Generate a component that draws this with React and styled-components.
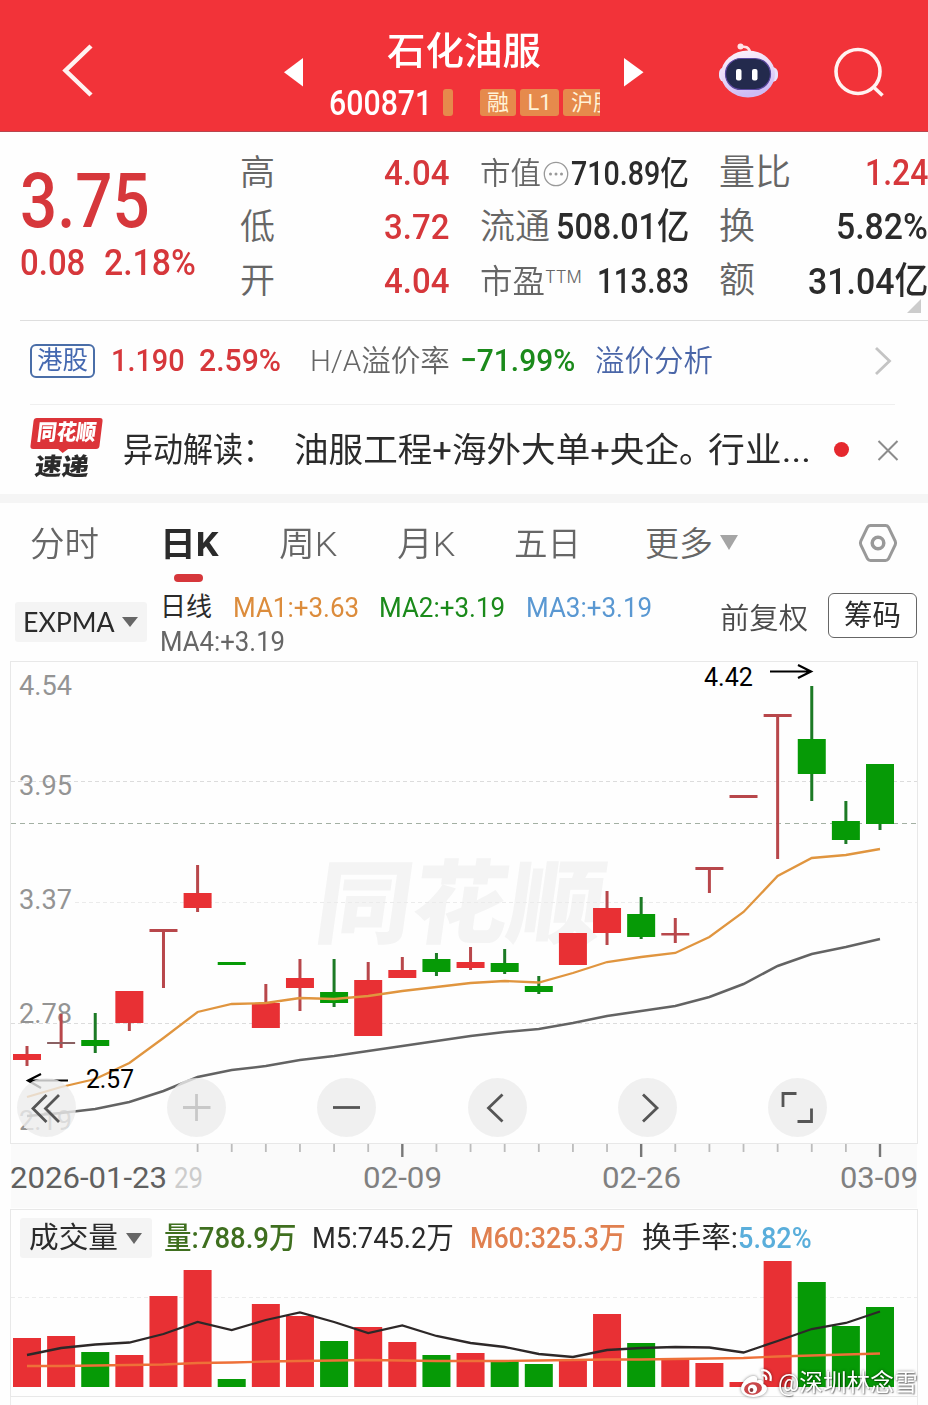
import React from "react";
import styled, { createGlobalStyle, css } from "styled-components";

const RED = "#d6373b";
const GREEN = "#1b8a1b";
const INK = "#2b2b2b";
const GREY = "#666";

const GlobalStyle = createGlobalStyle`
  * {
    box-sizing: border-box;
  }
  body {
    margin: 0;
    background: #fefefe;
    font-family: Roboto, "Noto Sans CJK SC", sans-serif;
    color: ${INK};
  }
  svg {
    display: block;
  }
`;

const Page = styled.div`
  width: 928px;
  height: 1405px;
  overflow: hidden;
  position: relative;
  display: flex;
  flex-direction: column;
`;

const FitBox = styled.span`
  display: inline-block;
  flex: none;
  width: ${(p) => p.$w}px;
  height: ${(p) => p.$size * 1.2}px;
  line-height: ${(p) => p.$size * 1.2}px;
  font-size: ${(p) => p.$size}px;
  font-weight: ${(p) => p.$weight || 400};
  font-family: ${(p) => p.$font || "inherit"};
  color: ${(p) => p.$color || "inherit"};
  white-space: nowrap;
  margin-left: ${(p) => p.$ml || 0}px;
`;

const FitText = styled.span`
  display: inline-block;
  transform-origin: 0 50%;
`;

// Squeezes or stretches a run of text to the given width
function Fit({ w, size, weight, color, font, ml, children }) {
  const ref = React.useRef(null);
  const [scale, setScale] = React.useState(1);

  React.useLayoutEffect(() => {
    setScale(w / ref.current.offsetWidth);
  }, [w, children]);

  return (
    <FitBox $w={w} $size={size} $weight={weight} $color={color} $font={font} $ml={ml}>
      <FitText ref={ref} style={{ transform: `scaleX(${scale})` }}>
        {children}
      </FitText>
    </FitBox>
  );
}

/* ---------- header ---------- */

const Header = styled.header`
  height: 132px;
  background: #f23339;
  border-bottom: 1px solid #b8464e;
  color: #fff;
  display: grid;
  grid-template-columns: 284px 20px 320px 20px 1fr;
  align-items: start;
  flex: none;
`;

const BackButton = styled.div`
  padding: 42px 0 0 60px;
`;

const ArrowSlot = styled.div`
  padding-top: 58px;
`;

const TitleBlock = styled.div`
  display: flex;
  flex-direction: column;
  padding-top: 29px;
`;

const NameLine = styled.div`
  padding-left: 83px;
  height: 44px;
`;

const CodeLine = styled.div`
  display: flex;
  align-items: center;
  height: 58px;
  width: 296px;
  padding-left: 25px;
  overflow: hidden;
`;

const Code = styled.div`
  padding-top: 3px;
`;

const Tag = styled.span`
  height: 27px;
  flex: none;
  width: ${(p) => p.$w}px;
  margin-left: ${(p) => p.$ml}px;
  border-radius: 3px;
  background: #e68a4c;
  color: #fff3d8;
  font-size: 22px;
  line-height: 27px;
  text-align: ${(p) => (p.$clip ? "left" : "center")};
  padding-left: ${(p) => (p.$clip ? "8px" : "0")};
  overflow: hidden;
  white-space: nowrap;
`;

const HeaderTools = styled.div`
  display: flex;
  gap: 54px;
  padding: 42px 0 0 72px;
`;

function StockHeader() {
  return (
    <Header>
      <BackButton>
        <svg width="36" height="58" viewBox="0 0 36 58" fill="none">
          <path d="M31 4 5.500 28.500 31 53" stroke="#fff3f1" strokeWidth="4.500" />
        </svg>
      </BackButton>
      <ArrowSlot>
        <svg width="20" height="29">
          <path d="M19 0V28.500L0 14.200Z" fill="#fff" />
        </svg>
      </ArrowSlot>
      <TitleBlock>
        <NameLine>
          <Fit w={154} size={38} weight={500}>石化油服</Fit>
        </NameLine>
        <CodeLine>
          <Code>
            <Fit w={103} size={35} weight={500}>600871</Fit>
          </Code>
          <Tag $w={10} $ml={11} />
          <Tag $w={36} $ml={27}>融</Tag>
          <Tag $w={39} $ml={4}>L1</Tag>
          <Tag $w={60} $ml={4} $clip>沪股</Tag>
        </CodeLine>
      </TitleBlock>
      <ArrowSlot>
        <svg width="20" height="29">
          <path d="M0 0V28.500L19.500 14.200Z" fill="#fff" />
        </svg>
      </ArrowSlot>
      <HeaderTools>
        <svg width="62" height="58" viewBox="0 0 62 58">
          <defs>
            <linearGradient id="shell" x1="0" y1="0" x2="0.300" y2="1">
              <stop offset="0" stopColor="#fff4fb" />
              <stop offset="0.600" stopColor="#e6d6f7" />
              <stop offset="1" stopColor="#cdbcf5" />
            </linearGradient>
          </defs>
          <path d="M34 10C33 5 29 4 25 5" stroke="#ffe3e6" strokeWidth="2.500" fill="none" />
          <circle cx="24.500" cy="4.500" r="3" fill="#ffe3e6" />
          <rect x="3" y="25" width="59" height="15" rx="6" fill="#e9e2fb" />
          <ellipse cx="32" cy="32" rx="27" ry="23.500" fill="url(#shell)" />
          <rect x="9.500" y="16.500" width="45" height="31" rx="15.500" fill="#232a4d" stroke="#5b48a0" strokeWidth="1.200" />
          <rect x="20" y="27" width="5.500" height="11.500" rx="2" fill="#fff" />
          <rect x="36" y="27" width="5.500" height="11.500" rx="2" fill="#fff" />
        </svg>
        <svg width="54" height="58" viewBox="0 0 54 58" fill="none" stroke="#fff3f1" strokeWidth="3.600">
          <circle cx="26" cy="29.500" r="22" />
          <path d="M41 44.500 50.500 53.500" />
        </svg>
      </HeaderTools>
    </Header>
  );
}

/* ---------- quote ---------- */

const Quote = styled.section`
  height: 189px;
  flex: none;
  margin-left: 20px;
  padding-top: 15px;
  border-bottom: 1px solid #dedede;
  display: grid;
  grid-template-columns: 220px 209px 209px 209px;
  align-items: start;
`;

const PriceBlock = styled.div`
  padding-top: 9px;
`;

const DeltaLine = styled.div`
  display: flex;
  margin-top: -5px;
`;

const Stats = styled.div`
  display: grid;
  grid-template-rows: repeat(3, 54px);
  margin-left: ${(p) => p.$shift || 0}px;
  width: 209px;
`;

const Stat = styled.div`
  display: flex;
  align-items: center;
  justify-content: space-between;
`;

const Label = styled.span`
  display: flex;
  align-items: center;
  gap: 2px;
`;

const Ttm = styled.span`
  font: 300 17px Inter, sans-serif;
  color: ${GREY};
  margin-bottom: 11px;
  margin-left: -2px;
`;

const Corner = styled.svg`
  position: absolute;
  top: 299px;
  left: 906px;
`;

function QuotePanel() {
  return (
    <Quote>
      <PriceBlock>
        <Fit w={130} size={76} weight={500} color={RED}>3.75</Fit>
        <DeltaLine>
          <Fit w={65} size={36} weight={500} color={RED}>0.08</Fit>
          <Fit w={92} size={36} weight={500} color={RED} ml={19}>2.18%</Fit>
        </DeltaLine>
      </PriceBlock>
      <Stats>
        {[["高", "4.04"], ["低", "3.72"], ["开", "4.04"]].map(([k, v]) => (
          <Stat key={k}>
            <Fit w={35} size={35} weight={350} color={GREY}>{k}</Fit>
            <Fit w={65} size={35} weight={500} color={RED}>{v}</Fit>
          </Stat>
        ))}
      </Stats>
      <Stats $shift={31}>
        <Stat>
          <Label>
            <Fit w={61} size={31} weight={350} color={GREY}>市值</Fit>
            <svg width="26" height="26" viewBox="0 0 26 26">
              <circle cx="13" cy="13" r="11.700" fill="none" stroke="#999" strokeWidth="1.300" />
              <g fill="#999">
                <circle cx="7.500" cy="13" r="1.500" />
                <circle cx="13" cy="13" r="1.500" />
                <circle cx="18.500" cy="13" r="1.500" />
              </g>
            </svg>
          </Label>
          <Fit w={118} size={33} weight={500}>710.89亿</Fit>
        </Stat>
        <Stat>
          <Fit w={70} size={35} weight={350} color={GREY}>流通</Fit>
          <Fit w={133} size={36} weight={500}>508.01亿</Fit>
        </Stat>
        <Stat>
          <Label>
            <Fit w={65} size={33} weight={350} color={GREY}>市盈</Fit>
            <Ttm>TTM</Ttm>
          </Label>
          <Fit w={92} size={35} weight={500}>113.83</Fit>
        </Stat>
      </Stats>
      <Stats $shift={61}>
        <Stat>
          <Fit w={72} size={36} weight={350} color={GREY}>量比</Fit>
          <Fit w={63} size={36} weight={500} color={RED}>1.24</Fit>
        </Stat>
        <Stat>
          <Fit w={36} size={36} weight={350} color={GREY}>换</Fit>
          <Fit w={92} size={36} weight={500}>5.82%</Fit>
        </Stat>
        <Stat>
          <Fit w={36} size={36} weight={350} color={GREY}>额</Fit>
          <Fit w={120} size={37} weight={500}>31.04亿</Fit>
        </Stat>
      </Stats>
      <Corner width="16" height="15">
        <path d="M15 0V14H1Z" fill="#ccc" />
      </Corner>
    </Quote>
  );
}

const HkRow = styled.section`
  height: 84px;
  flex: none;
  margin: 0 33px 0 30px;
  border-bottom: 1px solid #efefef;
  display: flex;
  align-items: center;
  padding-bottom: 4px;
`;

const HkBadge = styled.span`
  width: 65px;
  height: 34px;
  border: 2px solid #4a6ea8;
  border-radius: 6px;
  display: flex;
  align-items: center;
  justify-content: center;
  margin-right: 16px;
`;

const Spacer = styled.span`
  flex: 1;
`;

const News = styled.section`
  height: 89px;
  flex: none;
  display: flex;
  align-items: center;
  padding: 2px 29px 0 30px;
`;

const NewsLogo = styled.div`
  width: 74px;
  margin: 0 22px 2px -3px;
  display: flex;
  flex-direction: column;
  align-items: center;
  transform: skewX(-7deg);
`;

const LogoTop = styled.div`
  width: 69px;
  height: 31px;
  background: #dc3439;
  border-radius: 3px;
  color: #fff;
  display: flex;
  align-items: center;
  justify-content: center;
`;

const Dot = styled.span`
  width: 15px;
  height: 15px;
  border-radius: 50%;
  background: #e5282e;
  margin: 0 28px 3px 0;
`;

const Band = styled.div`
  height: 9px;
  flex: none;
  background: #f5f5f5;
`;

/* ---------- tabs ---------- */

const Tabs = styled.nav`
  height: 82px;
  flex: none;
  display: flex;
  align-items: center;
  padding-left: 30px;
  position: relative;
`;

const Underline = styled.i`
  position: absolute;
  left: 174px;
  top: 71px;
  width: 29px;
  height: 8px;
  border-radius: 4px;
  background: #d6373b;
`;

const Caret = styled.i`
  width: 0;
  height: 0;
  border: ${(p) => p.$s}px solid transparent;
  border-top: ${(p) => p.$h}px solid ${(p) => p.$color};
  border-bottom: 0;
  margin: 0 0 ${(p) => p.$mb || 0}px ${(p) => p.$ml}px;
`;

const HexIcon = styled.svg`
  margin: 0 30px 3px 0;
`;

function ChartTabs() {
  return (
    <Tabs>
      <Fit w={69} size={34} weight={350} color={GREY}>分时</Fit>
      <Fit w={59} size={34} weight={700} ml={61}>日K</Fit>
      <Fit w={58} size={34} weight={350} color={GREY} ml={60}>周K</Fit>
      <Fit w={58} size={34} weight={350} color={GREY} ml={60}>月K</Fit>
      <Fit w={67} size={34} weight={350} color={GREY} ml={59}>五日</Fit>
      <Fit w={68} size={34} weight={350} color={GREY} ml={64}>更多</Fit>
      <Caret $s={9} $h={15} $color="#a5a5a5" $ml={7} $mb={3} />
      <Spacer />
      <HexIcon width="40" height="40" viewBox="0 0 40 40" fill="none" stroke="#999">
        <path
          d="M12.500 2.500H27.500Q29.500 2.500 30.500 4.200L37.200 18Q38 20 37.200 22L30.500 35.800Q29.500 37.500 27.500 37.500H12.500Q10.500 37.500 9.500 35.800L2.800 22Q2 20 2.800 18L9.500 4.200Q10.500 2.500 12.500 2.500Z"
          strokeWidth="3"
        />
        <circle cx="20" cy="20" r="5.800" strokeWidth="3.500" />
      </HexIcon>
      <Underline />
    </Tabs>
  );
}

/* ---------- indicators ---------- */

const Indicators = styled.section`
  height: 76px;
  flex: none;
  display: flex;
  align-items: flex-start;
  padding-left: 15px;
`;

const Picker = styled.div`
  display: flex;
  align-items: center;
  width: ${(p) => p.$w}px;
  height: 40px;
  margin-top: ${(p) => p.$mt || 0}px;
  padding-left: ${(p) => p.$pl}px;
  background: #f4f4f4;
  border-radius: 3px;
  flex: none;
`;

const MaList = styled.div`
  display: flex;
  flex-wrap: wrap;
  align-content: flex-start;
  width: 573px;
  flex: none;
  padding: 6px 0 0 13px;
`;

const MaItem = styled.span`
  display: flex;
  align-items: center;
  height: 34px;
  ${(p) =>
    p.$last &&
    css`
      flex-basis: 100%;
    `}
`;

const Adjust = styled.span`
  margin-top: 17px;
  width: 108px;
  flex: none;
`;

const ChipButton = styled.button`
  width: 89px;
  height: 45px;
  margin-top: 8px;
  border: 1px solid #666;
  border-radius: 6px;
  background: #fff;
  padding: 2px 0 0;
  font-family: inherit;
  color: ${INK};
  display: flex;
  align-items: center;
  justify-content: center;
`;

function IndicatorBar() {
  return (
    <Indicators>
      <Picker $w={132} $pl={8} $mt={17}>
        <Fit w={92} size={27} font="Lato">EXPMA</Fit>
        <Caret $s={8} $h={10} $color="#666" $ml={7} />
      </Picker>
      <MaList>
        <MaItem><Fit w={52} size={26}>日线</Fit></MaItem>
        <MaItem><Fit w={126} size={27} color="#dc8c3c" ml={21}>MA1:+3.63</Fit></MaItem>
        <MaItem><Fit w={126} size={27} color={GREEN} ml={20}>MA2:+3.19</Fit></MaItem>
        <MaItem><Fit w={126} size={27} color="#5a98d2" ml={21}>MA3:+3.19</Fit></MaItem>
        <MaItem $last><Fit w={125} size={27} color={GREY}>MA4:+3.19</Fit></MaItem>
      </MaList>
      <Adjust>
        <Fit w={88} size={29} weight={350} color="#4a4a4a">前复权</Fit>
      </Adjust>
      <ChipButton>
        <Fit w={57} size={29}>筹码</Fit>
      </ChipButton>
    </Indicators>
  );
}

/* ---------- k line ---------- */

const UP = "#e83034";
const DOWN = "#069a06";
const UP_LINE = "#b8474b";
const DOWN_LINE = "#1c7a25";
const cx = (i) => 27 + i * 34.12;

// [wick top, wick bottom, body top, body bottom, rising]
const candles = [
  [1046, 1066, 1054, 1060, 1],
  [1014, 1048, 1042, 1044, 1],
  [1013, 1053, 1040, 1046, 0],
  [991, 1031, 991, 1023, 1],
  [929, 988, 929, 932, 1],
  [865, 912, 893, 908, 1],
  [962, 965, 962, 965, 0],
  [984, 1028, 1003, 1028, 1],
  [959, 1011, 978, 988, 1],
  [959, 1007, 992, 1003, 0],
  [962, 1036, 980, 1036, 1],
  [957, 978, 970, 978, 1],
  [953, 976, 959, 972, 0],
  [947, 970, 962, 968, 1],
  [949, 974, 963, 972, 0],
  [976, 994, 986, 992, 0],
  [933, 965, 933, 965, 1],
  [891, 945, 908, 933, 1],
  [897, 939, 914, 937, 0],
  [918, 943, 933, 935.5, 1],
  [867, 893, 867, 870, 1],
  [795, 798, 795, 798, 1],
  [714, 859, 714, 717, 1],
  [686, 801, 739, 774, 0],
  [801, 844, 821, 840, 0],
  [764, 830, 764, 824, 0],
];

const ma1 = [1097, 1087, 1079, 1063, 1038, 1012, 1004, 1003, 998, 999, 996, 991, 987, 983, 981, 982.5, 973, 962, 957, 953, 937, 912, 876, 858, 855, 849];
const ma4 = [1116, 1113, 1109, 1102, 1091, 1077, 1070, 1066, 1060, 1056, 1051, 1046, 1041, 1036, 1032, 1029, 1023, 1016, 1011, 1006, 997, 984, 966, 954, 947, 939];
const volTops = [1338, 1336, 1352, 1355, 1296, 1270, 1379, 1304, 1316, 1341, 1327, 1342, 1355, 1353, 1361, 1364, 1359, 1314, 1343, 1360, 1363, 1382, 1261, 1282, 1326, 1307];
const m5 = [1355, 1348, 1344.5, 1342.5, 1334, 1322, 1330, 1320, 1312.5, 1322, 1333, 1325.5, 1336, 1343, 1347, 1354, 1357, 1350, 1348, 1347, 1347.5, 1352.5, 1341, 1329, 1323, 1311.5];
const m60 = [1366, 1366, 1365.5, 1365, 1364.5, 1363, 1362.5, 1361.5, 1361, 1360.5, 1360, 1360.5, 1361, 1361, 1361, 1360.5, 1360, 1359.5, 1359.5, 1359, 1358.5, 1358, 1356.5, 1355.5, 1354.5, 1353.5];

const points = (ys) => ys.map((y, i) => `${cx(i)},${y}`).join(" ");

const ChartWrap = styled.section`
  position: relative;
  height: 547px;
  flex: none;
`;

const ChartText = styled.text`
  font-family: Roboto, sans-serif;
  font-size: ${(p) => p.$size || 27}px;
  fill: ${(p) => p.$fill || "#949494"};
`;

const Watermark = styled.text`
  font-family: "Noto Sans CJK SC", sans-serif;
  font-weight: 900;
  font-size: 91px;
  fill: #f4f4f4;
`;

const Controls = styled.div`
  position: absolute;
  left: 17px;
  top: 417px;
  display: flex;
  gap: 91.200px;
`;

const RoundButton = styled.span`
  width: 59px;
  height: 59px;
  border-radius: 50%;
  background: rgba(236, 236, 236, 0.8);
  ${(p) =>
    p.$disabled &&
    css`
      svg {
        opacity: 0.25;
      }
    `}
`;

const glyphs = [
  "M29.500 17 16 30.500 29.500 44M42 17 28.500 30.500 42 44",
  "M16 29.500H43.500M29.500 16V43",
  "M16 29.500H43",
  "M34.500 16.500 20.500 30 34.500 43.500",
  "M25 16.500 39 30 25 43.500",
  "M15 29V15.500H28.500M29.500 43.500H43.500V30.500",
];

function KLine() {
  return (
    <ChartWrap>
      <svg width="928" height="547" viewBox="0 661 928 547">
        <rect x="11" y="1144" width="906" height="64" fill="#fafafa" />
        <rect x="10.500" y="661.500" width="907" height="482" fill="#fefefe" stroke="#e8e8e8" />
        <Watermark x="444" y="936" textLength="288" lengthAdjust="spacingAndGlyphs" transform="skewX(-8)">
          同花顺
        </Watermark>
        <g stroke="#dcdcdc" strokeDasharray="4 3">
          <path d="M11 781.500H917" />
          <path d="M75 902.500H917" stroke="#ebebeb" />
          <path d="M11 1023.500H917" />
        </g>
        <path d="M11 823.500H917" stroke="#a3b0a3" strokeDasharray="5 4" />
        {[["4.54", 695], ["3.95", 795], ["3.37", 909], ["2.78", 1023], ["2.19", 1130]].map(([t, y]) => (
          <ChartText key={t} x="19" y={y} textLength="53" lengthAdjust="spacingAndGlyphs">{t}</ChartText>
        ))}
        {candles.map(([hi, lo, top, bottom, up], i) => (
          <g key={i}>
            <rect x={cx(i) - 1.5} y={hi} width="3" height={lo - hi} fill={up ? UP_LINE : DOWN_LINE} />
            <rect
              x={cx(i) - 14}
              y={top}
              width="28"
              height={bottom - top}
              fill={i === 1 ? "#8a6062" : bottom - top < 4 ? (up ? UP_LINE : DOWN) : up ? UP : DOWN}
            />
          </g>
        ))}
        <polyline points={points(ma4)} fill="none" stroke="#636363" strokeWidth="2.500" />
        <polyline points={points(ma1)} fill="none" stroke="#e0953f" strokeWidth="2.300" />
        <g fill="none" stroke="#000" strokeWidth="2.200">
          <path d="M770 671.500H811M798 665 811 671.500 798 678" />
          <path d="M68 1080.500H28M41 1074 28 1080.500 41 1088" />
        </g>
        <ChartText $size={25} $fill="#000" x="704" y="686" textLength="49" lengthAdjust="spacingAndGlyphs">4.42</ChartText>
        <ChartText $size={25} $fill="#000" x="86" y="1088" textLength="48" lengthAdjust="spacingAndGlyphs">2.57</ChartText>
        {candles.map((c, i) => {
          if (i < 5) return null;
          const major = i % 7 === 4;
          return (
            <path
              key={i}
              d={`M${cx(i)} 1144V${major ? 1157 : 1152}`}
              stroke={major ? "#777" : "#bcbcbc"}
              strokeWidth={major ? 2.4 : 1.8}
            />
          );
        })}
        <ChartText $size={29} $fill="#606060" x="10" y="1187.500" textLength="157" lengthAdjust="spacingAndGlyphs">2026-01-23</ChartText>
        <ChartText $size={29} $fill="#ccc" x="174" y="1187.500" textLength="29" lengthAdjust="spacingAndGlyphs">29</ChartText>
        <ChartText $size={29} $fill="#808080" x="363" y="1187.500" textLength="79" lengthAdjust="spacingAndGlyphs">02-09</ChartText>
        <ChartText $size={29} $fill="#808080" x="602" y="1187.500" textLength="79" lengthAdjust="spacingAndGlyphs">02-26</ChartText>
        <ChartText $size={29} $fill="#808080" x="840" y="1187.500" textLength="78" lengthAdjust="spacingAndGlyphs">03-09</ChartText>
      </svg>
      <Controls>
        {glyphs.map((d, i) => (
          <RoundButton key={i} $disabled={i === 1}>
            <svg width="59" height="59" fill="none" stroke="#555" strokeWidth="2.800">
              <path d={d} />
            </svg>
          </RoundButton>
        ))}
      </Controls>
    </ChartWrap>
  );
}

/* ---------- volume ---------- */

const Volume = styled.section`
  height: 188px;
  flex: none;
  margin: 1px 10px 0;
  border: 1px solid #e8e8e8;
  display: flex;
  flex-direction: column;
`;

const VolumeHead = styled.div`
  display: flex;
  align-items: center;
  height: 40px;
  margin-top: 8px;
  padding-left: 9px;
  flex: none;
`;

const NextPanel = styled.div`
  flex: 1;
  margin: 0 10px;
  border: 1px solid #ebebeb;
  border-width: 0 1px;
`;

function VolumePanel() {
  return (
    <Volume>
      <VolumeHead>
        <Picker $w={132} $pl={9}>
          <Fit w={89} size={29}>成交量</Fit>
          <Caret $s={8} $h={11} $color="#666" $ml={8} />
        </Picker>
        <Fit w={132} size={30} weight={500} color="#3f6f1f" ml={12}>量:788.9万</Fit>
        <Fit w={142} size={30} ml={16}>M5:745.2万</Fit>
        <Fit w={156} size={30} weight={500} color="#e08050" ml={16}>M60:325.3万</Fit>
        <Fit w={96} size={29} ml={16}>换手率:</Fit>
        <Fit w={74} size={30} weight={500} color="#5aaedb">5.82%</Fit>
      </VolumeHead>
      <svg width="906" height="138" viewBox="11 1258 906 138">
        <path d="M11 1297.500H917" stroke="#ececec" strokeDasharray="4 3" />
        {volTops.map((y, i) => (
          <rect key={i} x={cx(i) - 14} y={y} width="28" height={1387 - y} fill={candles[i][4] ? UP : DOWN} />
        ))}
        <polyline points={points(m5)} fill="none" stroke="#2d2828" strokeWidth="2.300" />
        <polyline points={points(m60)} fill="none" stroke="#ee7038" strokeWidth="2.300" />
      </svg>
    </Volume>
  );
}

const Credit = styled.div`
  position: absolute;
  left: 740px;
  top: 1368px;
  display: flex;
  align-items: center;
  gap: 5px;
  color: #fff;
  text-shadow: 0 0 3px rgba(0, 0, 0, 0.55), 1px 1px 1px rgba(0, 0, 0, 0.35);
  svg {
    filter: drop-shadow(0 0 1.5px rgba(0, 0, 0, 0.5));
  }
`;

export default function App() {
  return (
    <Page>
      <GlobalStyle />
      <StockHeader />
      <QuotePanel />
      <HkRow>
        <HkBadge>
          <Fit w={51} size={25} color="#4468b0">港股</Fit>
        </HkBadge>
        <Fit w={74} size={32} weight={500} color={RED}>1.190</Fit>
        <Fit w={82} size={32} weight={500} color={RED} ml={14}>2.59%</Fit>
        <Fit w={140} size={30} weight={350} color={GREY} ml={29}>H/A溢价率</Fit>
        <Fit w={115} size={32} weight={500} color={GREEN} ml={10}>−71.99%</Fit>
        <Fit w={118} size={30} weight={350} color="#4a66a8" ml={20}>溢价分析</Fit>
        <Spacer />
        <svg width="20" height="32" fill="none" stroke="#c4c4c4" strokeWidth="2.800">
          <path d="M1 3 14.500 16 1 29" />
        </svg>
      </HkRow>
      <News>
        <NewsLogo>
          <LogoTop>
            <Fit w={59} size={22} weight={900}>同花顺</Fit>
          </LogoTop>
          <svg width="12" height="4">
            <path d="M0 0H10L5 4Z" fill="#dc3439" />
          </svg>
          <Fit w={54} size={24} weight={900}>速递</Fit>
        </NewsLogo>
        <Fit w={150} size={34}>异动解读：</Fit>
        <Fit w={420} size={34} ml={21}>油服工程+海外大单+央企。</Fit>
        <Fit w={103} size={34} ml={-6}>行业...</Fit>
        <Spacer />
        <Dot />
        <svg width="22" height="22" stroke="#8c8c8c" strokeWidth="2">
          <path d="M1.500 1 20.500 20M20.500 1 1.500 20" />
        </svg>
      </News>
      <Band />
      <ChartTabs />
      <IndicatorBar />
      <KLine />
      <VolumePanel />
      <NextPanel />
      <Credit>
        <svg width="33" height="30" viewBox="0 0 33 30">
          <path
            d="M13 8C8 8 1 15 1 20.500 1 26 7 29 13.500 29 21 29 27 25 27 20.500 27 18 25 16.500 23 16 23.500 13 22.500 11 17 12.500 17.500 10 17 8 13 8Z"
            fill="#fff"
          />
          <ellipse cx="13" cy="20.500" rx="9" ry="6.300" fill="#c9474a" transform="rotate(-8 13 20.500)" />
          <circle cx="12.500" cy="21" r="4.600" fill="#fff" />
          <circle cx="11.500" cy="22" r="1.900" fill="#8a3a3c" />
          <path d="M21 2.500C27 1 32 6 30.500 13M22 7.500C25 6.500 27 9 26 12" fill="none" stroke="#fff" strokeWidth="2.200" />
        </svg>
        <Fit w={140} size={24}>@深圳林念雪</Fit>
      </Credit>
    </Page>
  );
}
